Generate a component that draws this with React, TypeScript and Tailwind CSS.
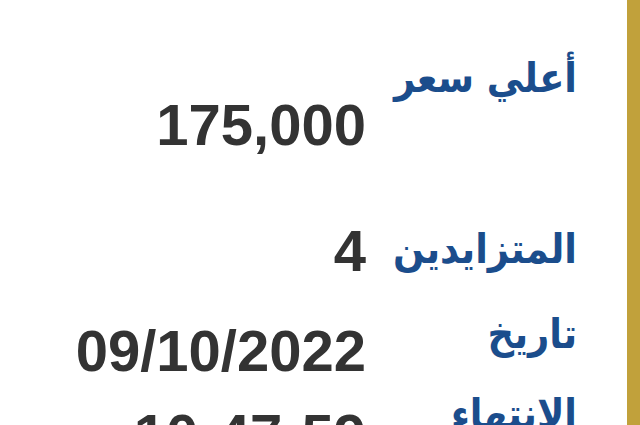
const rows = [
  { label: 'أعلي سعر', value: '175,000', h: 'h-[171px]', vt: 'pt-[45px]', wrap: 'whitespace-nowrap' },
  { label: 'المتزايدين', value: '4', h: 'h-[85px]', vt: 'pt-[0px]', wrap: 'whitespace-nowrap' },
  { label: 'تاريخ الانتهاء', value: '09/10/2022 10:47:59', h: 'h-[200px]', vt: 'pt-[15px]', wrap: '' },
];

export default function App() {
  return (
    <div className="w-[640px] h-[425px] bg-white overflow-hidden flex">
      {/* auction details */}
      <div dir="rtl" className="flex-1 pr-[50px] pt-[38px]">
        {rows.map((row) => (
          <div key={row.label} className={`flex items-start ${row.h}`}>
            <div
              className={`w-[190px] shrink-0 text-[#1b4d8c] text-[41px] leading-[80px] font-semibold ${row.wrap}`}
              style={{ fontFamily: '"DejaVu Sans Condensed", "DejaVu Sans", sans-serif' }}
            >
              {row.label}
            </div>
            <div
              className={`w-[300px] ms-[21px] ${row.vt} text-[#333333] text-[58px] leading-[84px] font-bold`}
              style={{ fontFamily: '"Liberation Sans", Arial, sans-serif' }}
            >
              {row.value}
            </div>
          </div>
        ))}
      </div>
      <div className="w-[13px] bg-[#c1a13b]" />
    </div>
  );
}
